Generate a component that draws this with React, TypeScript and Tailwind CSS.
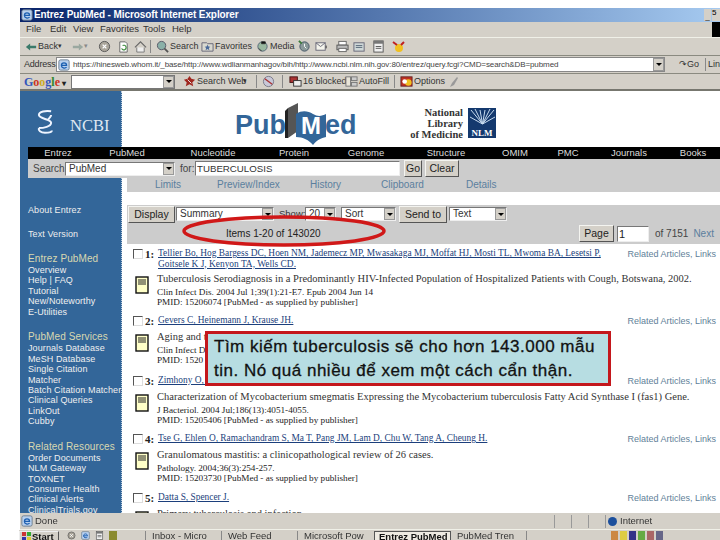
import React from "react";

const sans = "font-['Liberation_Sans',Arial,sans-serif]";
const serif = "font-['Liberation_Serif','Times_New_Roman',serif]";

function Arrow() {
  return <span className="w-0 h-0 border-x-[3px] border-x-transparent border-t-[3px] border-t-black" />;
}

function Sel({ w, text }: { w: string; text: string }) {
  return (
    <div className={`${w} h-[14px] bg-white border border-[#777] border-b-[#eee] border-r-[#eee] flex items-center justify-between pl-[3px] overflow-hidden`}>
      <span className="text-[10px] leading-none text-[#333] whitespace-nowrap">{text}</span>
      <span className="w-[11px] h-[12px] bg-[#d4d0c8] border border-[#999] flex items-center justify-center shrink-0"><Arrow /></span>
    </div>
  );
}

function Btn({ children, w }: { children: React.ReactNode; w: string }) {
  return (
    <div className={`${w} h-[17px] bg-[#d4d0c8] border border-[#f4f4f0] border-r-[#555] border-b-[#555] flex items-center justify-center text-[10.5px] leading-none text-[#222]`}>
      {children}
    </div>
  );
}

function DocIcon() {
  return (
    <svg width="14" height="18" viewBox="0 0 14 18" className="shrink-0">
      <rect x="1" y="1" width="12" height="16" fill="#ffffc8" stroke="#111" strokeWidth="1.4" />
      <path d="M3 4h8M3 6h8M3 8h8" stroke="#222" strokeWidth="1" />
    </svg>
  );
}

function Ico({ d, size = 14 }: { d: React.ReactNode; size?: number }) {
  return <svg width={size} height={size} viewBox="0 0 14 14" className="shrink-0">{d}</svg>;
}

const icons: Record<string, React.ReactNode> = {
  back: <path d="M1 7l5-4v2.5h7v3H6V11z" fill="#3a7a6a" />,
  fwd: <path d="M13 7L8 3v2.5H1v3h7V11z" fill="#9aa8a0" />,
  stop: <><circle cx="7" cy="7" r="5.5" fill="#aaa59a" stroke="#555" /><path d="M5 5l4 4M9 5l-4 4" stroke="#fff" strokeWidth="1.4" /></>,
  refresh: <><path d="M3 2h6l2 2v9H3z" fill="#fff" stroke="#666" /><path d="M5 9a2.5 2.5 0 1 0 1-3" fill="none" stroke="#3a8a3a" strokeWidth="1.2" /></>,
  home: <><path d="M1 8l6-6 6 6" fill="none" stroke="#666" strokeWidth="1.2" /><path d="M3 8v5h8V8" fill="#eee" stroke="#777" /></>,
  search: <><circle cx="6" cy="6" r="4.5" fill="#8ab0a8" stroke="#556" /><path d="M9 9l4 4" stroke="#555" strokeWidth="2" /></>,
  fav: <><path d="M1 3h5l1 1h6v8H1z" fill="#d8d8d0" stroke="#667" /><path d="M7 5l1 2 2 .2-1.5 1.4L9 11 7 9.8 5 11l.5-2.4L4 7.2 6 7z" fill="#4a6a9a" /></>,
  media: <><circle cx="7" cy="7" r="5" fill="#9ab8a0" stroke="#567" /><path d="M6 2h4v2H6zM3 9l3 3" stroke="#333" strokeWidth="1" /></>,
  history: <><circle cx="7" cy="7" r="5" fill="#8a9a9a" stroke="#456" /><path d="M7 4v3l2 2" stroke="#fff" strokeWidth="1" fill="none" /><path d="M1 1l3 3" stroke="#3a7a3a" strokeWidth="2" /></>,
  mail: <><rect x="1" y="3" width="10" height="8" fill="#f4f4ec" stroke="#667" /><path d="M1 3l5 4 5-4" fill="none" stroke="#667" /><path d="M12 6v3" stroke="#333" /></>,
  print: <><rect x="3" y="1.5" width="8" height="4" fill="#fff" stroke="#666" /><rect x="1" y="5.5" width="12" height="5" fill="#bbb" stroke="#555" /><rect x="3" y="9" width="8" height="3.5" fill="#fff" stroke="#666" /></>,
  edit: <><rect x="1" y="3" width="11" height="9" fill="#cfd8d8" stroke="#667" /><path d="M3 6h7M3 8h7" stroke="#567" /></>,
  page: <><rect x="2" y="1" width="10" height="12" fill="#f0f0f0" stroke="#555" /><rect x="2" y="1" width="10" height="3" fill="#777" /><path d="M4 7h6M4 9h6" stroke="#555" /></>,
  ie: <><rect x="1" y="1" width="12" height="12" rx="2" fill="#b8d0ee" stroke="#678" /><path d="M4 7.5c0-4 6-4 6 0H4c0 3 4 4 6 2" fill="none" stroke="#1c5fb0" strokeWidth="1.5" /></>,
  sweb: <><path d="M7 1l2 3 4 1-3 3 1 4-4-2-4 2 1-4-3-3 4-1z" fill="#a02820" /><path d="M5 5l4 4" stroke="#eee" /></>,
  site: <><circle cx="7" cy="7" r="5.5" fill="#c8c8d8" stroke="#778" /><path d="M3 4l8 6" stroke="#a33" strokeWidth="1.5" /></>,
  popup: <><rect x="1" y="2" width="8" height="6" fill="#a33" stroke="#411" /><rect x="5" y="6" width="8" height="6" fill="#eee" stroke="#333" /></>,
  fill: <><rect x="1" y="2" width="5" height="10" fill="#e8e4d8" stroke="#777" /><rect x="7" y="2" width="6" height="4" fill="#ccc" stroke="#777" /><rect x="7" y="8" width="6" height="4" fill="#ccc" stroke="#777" /></>,
  opts: <><rect x="1" y="2" width="12" height="10" fill="#c03020" stroke="#622" /><circle cx="9" cy="8" r="3.5" fill="#f0c020" /><circle cx="5" cy="7" r="2.5" fill="#fff" /></>,
};

function Tool({ i, label, w }: { i: string; label?: string; w: string }) {
  return (
    <div className={`${w} flex items-center gap-[1px] shrink-0`}>
      <Ico d={icons[i]} size={13} />
      {label ? <span className="text-[9px] leading-none text-[#333] whitespace-nowrap">{label}</span> : null}
    </div>
  );
}

function SideGroup({ title, items }: { title: string; items: string[] }) {
  return (
    <div className="flex flex-col">
      <div className="text-[10px] tracking-[0.1px] leading-[12px] h-[12px] text-[#d8d8b0] whitespace-nowrap">{title}</div>
      {items.map((s) => (
        <div key={s} className="text-[9px] tracking-[0.1px] leading-[10.45px] h-[10.45px] text-[#f0f0f0] whitespace-nowrap">{s}</div>
      ))}
    </div>
  );
}

type Res = { n: string; a: string[]; t: string; j: string; p: string; h: string };

function Result({ n, a, t, j, p, h }: Res) {
  return (
    <div className={`flex flex-col ${h} overflow-hidden`}>
      <div className="flex items-start">
        <div className="w-[10px] h-[10px] mt-[1px] ml-[6px] border border-[#555] border-b-[#ddd] border-r-[#ddd] bg-white shrink-0" />
        <div className={`${serif} w-[14px] ml-[1px] text-[11px] leading-[12px] font-bold text-[#222] shrink-0 pl-[1px]`}>{n}</div>
        <div className={`${serif} w-[468px] text-[9.4px] leading-[10.5px] text-[#1c3f7c] underline shrink-0`}>
          {a.map((l) => (
            <div key={l} className="whitespace-nowrap">{l}</div>
          ))}
        </div>
        <div className="ml-auto pr-[4px] pt-[1px] text-[9px] leading-[11px] text-[#5f7f99] whitespace-nowrap">Related Articles, Links</div>
      </div>
      <div className="flex items-start mt-[5px]">
        <div className="ml-[8px] w-[22px] mt-[2px] shrink-0"><DocIcon /></div>
        <div className={`${serif} text-[9.2px] leading-[10.6px] text-[#222] whitespace-nowrap flex flex-col`}>
          <div className="mb-[2px] text-[10.5px] text-[#333]">{t}</div>
          <div>{j}</div>
          <div>{p}</div>
        </div>
      </div>
    </div>
  );
}

const nav: [string, string][] = [
  ["Entrez", "w-[60px]"],
  ["PubMed", "w-[78px]"],
  ["Nucleotide", "w-[94px]"],
  ["Protein", "w-[68px]"],
  ["Genome", "w-[76px]"],
  ["Structure", "w-[84px]"],
  ["OMIM", "w-[54px]"],
  ["PMC", "w-[52px]"],
  ["Journals", "w-[70px]"],
  ["Books", "w-[58px]"],
];

export default function App() {
  return (
    <div className={`${sans} relative w-[720px] h-[540px] overflow-hidden bg-white pt-[8px] pl-[20px]`}>
      <div className="w-[700px] h-[532px] flex flex-col blur-[0.35px]">
        {/* Title bar */}
        <div className="h-[14px] shrink-0 bg-gradient-to-r from-[#0a246a] to-[#a6caf0] flex items-center pl-[1px]">
          <span className="mr-[1px]"><Ico d={icons.ie} size={12} /></span>
          <span className="text-white text-[10px] font-bold leading-none whitespace-nowrap tracking-[-0.1px]">Entrez PubMed - Microsoft Internet Explorer</span>
          <span className="ml-auto w-[7px] h-[12px] bg-[#d4d0c8] flex items-end justify-center text-[8px] leading-none text-black">_</span>
          <span className="ml-[1px] w-[8px] h-[12px] bg-[#d4d0c8] text-[8px] leading-none text-black">5</span>
        </div>
        {/* Menu */}
        <div className="h-[16px] pb-[1px] shrink-0 bg-[#d4d0c8] border-b border-[#f0f0e8] flex items-center pl-[6px] text-[9.5px] text-[#333] leading-none">
          <span className="w-[24px]">File</span>
          <span className="w-[23px]">Edit</span>
          <span className="w-[27px]">View</span>
          <span className="w-[43px]">Favorites</span>
          <span className="w-[29px]">Tools</span>
          <span>Help</span>
          <span className="ml-auto w-[8px] h-[15px] bg-black" />
        </div>
        {/* Toolbar */}
        <div className="h-[18px] shrink-0 bg-[#d4d0c8] border-b border-[#8a8a80] flex items-center pl-[5px] text-[9px] text-[#333]">
          <Ico d={icons.back} size={12} />
          <span className="w-[20px] ml-[1px]">Back</span>
          <span className="w-[14px] text-[7px]">▾</span>
          <Ico d={icons.fwd} size={12} />
          <span className="w-[14px] text-[7px] text-[#888]">▾</span>
          <Tool i="stop" w="w-[19px]" />
          <Tool i="refresh" w="w-[17px]" />
          <Tool i="home" w="w-[16px]" />
          <span className="w-px h-[13px] bg-[#888] mr-[5px]" />
          <Tool i="search" label="Search" w="w-[45px]" />
          <Tool i="fav" label="Favorites" w="w-[55px]" />
          <Tool i="media" label="Media" w="w-[42px]" />
          <Tool i="history" w="w-[17px]" />
          <Tool i="mail" w="w-[21px]" />
          <Tool i="print" w="w-[17px]" />
          <Tool i="edit" w="w-[19px]" />
          <Tool i="page" w="w-[16px]" />
          <svg width="13" height="12" viewBox="0 0 13 12" className="ml-[4px]"><circle cx="7" cy="7" r="4" fill="#f0c020" /><path d="M1 1l4 3M12 1L9 4" stroke="#c02020" strokeWidth="2" /></svg>
        </div>
        {/* Address */}
        <div className="h-[18px] shrink-0 bg-[#d4d0c8] border-b border-[#8a8a80] flex items-center pl-[4px] text-[9px] text-[#333]">
          <span className="w-[32px] shrink-0 leading-none tracking-[-0.2px]">Address</span>
          <div className="w-[609px] h-[15px] shrink-0 bg-white border border-[#888] flex items-center overflow-hidden">
            <span className="ml-[1px] mr-[3px]"><Ico d={icons.ie} size={12} /></span>
            <span className="text-[8px] tracking-[-0.1px] leading-none whitespace-nowrap text-[#444] flex-1">https://hinesweb.whom.it/_base/http://www.wdlianmanhagov/bih/http://www.ncbi.nlm.nih.gov:80/entrez/query.fcgi?CMD=search&amp;DB=pubmed</span>
            <span className="w-[11px] h-[13px] bg-[#d4d0c8] border border-[#999] flex items-center justify-center shrink-0"><Arrow /></span>
          </div>
          <span className="ml-[14px] w-[26px] shrink-0 leading-none">↷Go</span>
          <span className="w-px h-[13px] bg-[#888] mr-[2px]" />
          <span className="w-[12px] overflow-hidden leading-none whitespace-nowrap">Lin</span>
        </div>
        {/* Google */}
        <div className="h-[17px] shrink-0 bg-[#d4d0c8] border-b-2 border-[#77776f] flex items-center pl-[4px] text-[9px] text-[#333]">
          <span className={`${serif} w-[47px] text-[12px] font-bold leading-none whitespace-nowrap shrink-0`}>
            <span className="text-[#3355bb]">G</span><span className="text-[#cc3322]">o</span><span className="text-[#ccaa22]">o</span><span className="text-[#3355bb]">g</span><span className="text-[#33882f]">l</span><span className="text-[#cc3322]">e</span><span className="text-[#222] text-[8px]"> ▾</span>
          </span>
          <div className="w-[104px] h-[14px] shrink-0 bg-white border border-[#777] flex justify-end">
            <span className="w-[11px] h-[12px] bg-[#d4d0c8] border border-[#999] flex items-center justify-center"><Arrow /></span>
          </div>
          <span className="ml-[8px]"><Tool i="sweb" label="Search Web" w="w-[60px]" /></span>
          <span className="text-[7px] w-[8px]">▾</span>
          <span className="w-px h-[13px] bg-[#888] mx-[5px]" />
          <Tool i="site" w="w-[20px]" />
          <span className="w-px h-[13px] bg-[#888] mr-[6px]" />
          <Tool i="popup" label="16 blocked" w="w-[56px]" />
          <Tool i="fill" label="AutoFill" w="w-[44px]" />
          <span className="w-px h-[13px] bg-[#888] mx-[5px]" />
          <Tool i="opts" label="Options" w="w-[47px]" />
          <svg width="10" height="12" viewBox="0 0 10 12" className="ml-[2px]"><path d="M8 1L3 7l-2 4 4-2 4-7z" fill="#999" /></svg>
        </div>
        {/* Page */}
        <div className="flex-1 min-h-0 flex bg-white overflow-hidden">
          {/* Sidebar */}
          <div className="w-[102px] shrink-0 bg-[#336699] border-r border-dotted border-[#bcd] flex flex-col pl-[8px] overflow-hidden">
            <div className="flex items-end h-[56px] pl-[6px] pb-[12px] gap-[14px] shrink-0">
              <svg width="22" height="26" viewBox="0 0 22 34" className="shrink-0" fill="none" stroke="#eef4ff" strokeWidth="2.6">
                <path d="M19 3C12 2 3 3 3 8s16 5 16 10-10 7-16 7" />
                <path d="M3 25c-1 3 2 6 8 6s9-1 9-3" />
                <path d="M15 14c2-3 4-4 4-6" />
              </svg>
              <span className={`${serif} text-[16.5px] leading-[18px] text-[#dfe8f2]`}>NCBI</span>
            </div>
            <div className="h-[57px] shrink-0" />
            <div className="text-[9px] tracking-[0.1px] leading-[12px] text-[#eee] whitespace-nowrap">About Entrez</div>
            <div className="text-[9px] tracking-[0.1px] leading-[12px] text-[#eee] mt-[12px] whitespace-nowrap">Text Version</div>
            <div className="mt-[13px]"><SideGroup title="Entrez PubMed" items={["Overview", "Help | FAQ", "Tutorial", "New/Noteworthy", "E-Utilities"]} /></div>
            <div className="mt-[14px]"><SideGroup title="PubMed Services" items={["Journals Database", "MeSH Database", "Single Citation", "Matcher", "Batch Citation Matcher", "Clinical Queries", "LinkOut", "Cubby"]} /></div>
            <div className="mt-[14px]"><SideGroup title="Related Resources" items={["Order Documents", "NLM Gateway", "   TOXNET", "Consumer Health", "Clinical Alerts", "ClinicalTrials.gov"]} /></div>
          </div>
          {/* Main */}
          <div className="flex-1 min-w-0 flex flex-col">
            {/* Logos */}
            <div className="h-[56px] shrink-0 flex">
              <div className="ml-[113px] mt-[12px] w-[122px] flex items-center h-[44px] text-[#336699] font-bold text-[27px] leading-none">
                <span>Pub</span>
                <svg width="14" height="38" viewBox="0 0 14 38" className="shrink-0 -ml-[1px] mb-[8px]">
                  <path d="M3 36V6L13 1v28z" fill="#555" />
                  <path d="M3 36V6l-3 3v27z" fill="#222" />
                </svg>
                <span className="relative w-[30px] h-[34px] flex items-center justify-center text-white text-[24px] shrink-0 -ml-[3px] mt-[2px]">
                  <svg width="30" height="36" viewBox="0 0 30 36" className="absolute left-0 top-0"><path d="M0 5c6-4 12-3 17 0s9 2 13 0v23c-5 1-9 3-13 8-4-5-10-8-17-8z" fill="#336699" /></svg>
                  <span className="relative">M</span>
                </span>
                <span className="-ml-[1px]">ed</span>
              </div>
              <div className={`${serif} ml-[50px] mt-[16px] flex flex-col items-end text-[10.5px] leading-[11px] text-[#333] whitespace-nowrap font-bold w-[56px]`}>
                <span>National</span>
                <span>Library</span>
                <span>of Medicine</span>
              </div>
              <div className="ml-[5px] mt-[17px] w-[28px] h-[30px] bg-[#14396e] flex flex-col items-center justify-end overflow-hidden">
                <svg width="25" height="20" viewBox="0 0 25 20" className="shrink-0" stroke="#c8dcf0" strokeWidth="1">
                  <path d="M12.5 16L1 2M12.5 16L5 1M12.5 16L10 2M12.5 16L15 2M12.5 16L20 1M12.5 16L24 2M12.5 16L0 9M12.5 16L25 9" />
                </svg>
                <span className={`${serif} text-[9px] font-bold leading-[10px] text-white`}>NLM</span>
              </div>
            </div>
            {/* Black nav */}
            <div className="relative -ml-[94px] h-[12px] shrink-0 bg-black flex items-center text-[9.5px] leading-none text-[#ddd]">
              {nav.map(([t, w]) => (
                <span key={t} className={`${w} text-center shrink-0 whitespace-nowrap`}>{t}</span>
              ))}
            </div>
            {/* Search row */}
            <div className="relative -ml-[94px] h-[19px] shrink-0 bg-[#cccccc] flex items-center pl-[5px] text-[10px] text-[#444]">
              <span className="w-[32px] leading-none shrink-0">Search</span>
              <Sel w="w-[110px]" text="PubMed" />
              <span className="ml-[5px] w-[15px] leading-none shrink-0">for:</span>
              <div className="w-[205px] h-[15px] bg-white border border-[#777] border-b-[#eee] border-r-[#eee] text-[9.7px] leading-[13px] text-[#333] pl-[1px] shrink-0">TUBERCULOSIS</div>
              <div className="ml-[4px]"><Btn w="w-[18px]">Go</Btn></div>
              <div className="ml-[3px]"><Btn w="w-[34px]">Clear</Btn></div>
            </div>
            {/* Tabs */}
            <div className="ml-[5px] h-[14px] shrink-0 bg-[#cccccc] flex items-center text-[10px] leading-none text-[#5b7f9e] whitespace-nowrap">
              <span className="ml-[28px] w-[62px]">Limits</span>
              <span className="w-[93px]">Preview/Index</span>
              <span className="w-[71px]">History</span>
              <span className="w-[85px]">Clipboard</span>
              <span>Details</span>
            </div>
            <div className="h-[13px] shrink-0" />
            {/* Display bar */}
            <div className="ml-[5px] h-[39px] shrink-0 bg-[#cccccc] flex flex-col">
              <div className="h-[18px] shrink-0 flex items-center pl-[1px] text-[9.5px] text-[#333]">
                <Btn w="w-[47px]">Display</Btn>
                <div className="ml-[1px]"><Sel w="w-[98px]" text="Summary" /></div>
                <span className="ml-[5px] w-[26px] leading-none">Show:</span>
                <Sel w="w-[31px]" text="20" />
                <div className="ml-[5px]"><Sel w="w-[55px]" text="Sort" /></div>
                <div className="ml-[3px]"><Btn w="w-[48px]">Send to</Btn></div>
                <div className="ml-[2px]"><Sel w="w-[58px]" text="Text" /></div>
              </div>
              <div className="flex-1 flex items-center text-[10px] text-[#222]">
                <span className="ml-[99px] leading-none whitespace-nowrap w-[100px]">Items 1-20 of 143020</span>
                <div className="ml-[253px]"><Btn w="w-[35px]">Page</Btn></div>
                <div className="ml-[3px] w-[32px] h-[16px] bg-white border border-[#777] border-b-[#eee] border-r-[#eee] text-[11px] leading-[14px] pl-[1px]">1</div>
                <span className="ml-[6px] leading-none text-[#444] whitespace-nowrap">of 7151</span>
                <span className="ml-[5px] leading-none text-[#5b7f9e]">Next</span>
              </div>
            </div>
            {/* Results */}
            <div className="ml-[5px] mt-[4px] flex flex-col">
              <Result n="1:" h="h-[67px]" a={["Tellier Bo, Hog Bargess DC, Hoen NM, Jademecz MP, Mwasakaga MJ, Moffat HJ, Mosti TL, Mwoma BA, Lesetsi P,", "Goitsele K J, Kenyon TA, Wells CD."]} t="Tuberculosis Serodiagnosis in a Predominantly HIV-Infected Population of Hospitalized Patients with Cough, Botswana, 2002." j="Clin Infect Dis. 2004 Jul 1;39(1):21-E7. Epub 2004 Jun 14" p="PMID: 15206074 [PubMed - as supplied by publisher]" />
              <Result n="2:" h="h-[60px]" a={["Gevers C, Heinemann J, Krause JH."]} t="Aging and the" j="Clin Infect Dis." p="PMID: 1520" />
              <Result n="3:" h="h-[58px]" a={["Zimhony O, Vilcheze C."]} t="Characterization of Mycobacterium smegmatis Expressing the Mycobacterium tuberculosis Fatty Acid Synthase I (fas1) Gene." j="J Bacteriol. 2004 Jul;186(13):4051-4055." p="PMID: 15205406 [PubMed - as supplied by publisher]" />
              <Result n="4:" h="h-[59px]" a={["Tse G, Ehlen O, Ramachandram S, Ma T, Pang JM, Lam D, Chu W, Tang A, Cheung H."]} t="Granulomatous mastitis: a clinicopathological review of 26 cases." j="Pathology. 2004;36(3):254-257." p="PMID: 15203730 [PubMed - as supplied by publisher]" />
              <Result n="5:" h="h-[60px]" a={["Datta S, Spencer J."]} t="Primary tuberculosis and infection" j="" p="" />
            </div>
          </div>
        </div>
        {/* Status bar */}
        <div className="h-[17px] shrink-0 bg-[#d4d0c8] border-b border-[#f0f0e8] flex items-center pl-[1px] text-[9.5px] leading-none text-[#333]">
          <span className="mr-[2px]"><Ico d={icons.ie} size={12} /></span>
          <span className="w-[519px]">Done</span>
          <span className="w-px h-[13px] bg-[#999] mr-[16px]" />
          <span className="w-px h-[13px] bg-[#999] mr-[16px]" />
          <span className="w-px h-[13px] bg-[#999] mr-[16px]" />
          <span className="w-px h-[13px] bg-[#999] mr-[2px]" />
          <span className="w-[9px] h-[9px] rounded-full bg-[#1c4f9c] mr-[3px]" />
          <span>Internet</span>
        </div>
        {/* Taskbar */}
        <div className="h-[10px] shrink-0 -ml-[1px] bg-[#d4d0c8] flex items-start pt-[1px] text-[9.5px] leading-none text-[#333] overflow-hidden">
          <span className="w-[40px] h-[12px] border border-[#eee] border-b-[#555] border-r-[#555] pl-[2px] font-bold text-[#111] whitespace-nowrap shrink-0 flex items-start gap-[1px]">
            <svg width="9" height="9" viewBox="0 0 9 9" className="shrink-0"><rect width="4" height="4" fill="#c33" /><rect x="5" width="4" height="4" fill="#3a3" /><rect y="5" width="4" height="4" fill="#33a" /><rect x="5" y="5" width="4" height="4" fill="#dc3" /></svg>
            Start
          </span>
          <span className="w-[86px] flex items-center gap-[5px] pl-[8px] shrink-0">
            <Ico d={icons.stop} size={9} /><Ico d={icons.ie} size={9} /><Ico d={icons.page} size={9} /><span className="w-[8px] h-[9px] bg-[#8a8a30]" />
          </span>
          <span className="w-[76px] h-[12px] border-l border-[#888] pl-[6px] whitespace-nowrap overflow-hidden shrink-0">Inbox - Micro</span>
          <span className="w-[76px] h-[12px] border-l border-[#888] pl-[6px] whitespace-nowrap overflow-hidden shrink-0">Web Feed</span>
          <span className="w-[77px] h-[12px] border-l border-[#888] pl-[6px] whitespace-nowrap overflow-hidden shrink-0">Microsoft Pow</span>
          <span className="w-[77px] h-[12px] border border-[#555] bg-[#eeeae2] pl-[4px] font-bold text-[#111] whitespace-nowrap overflow-hidden shrink-0">Entrez PubMed</span>
          <span className="w-[76px] h-[12px] border-r border-[#888] pl-[6px] whitespace-nowrap overflow-hidden shrink-0">PubMed Tren</span>
          <span className="ml-[84px] flex items-center gap-[2px] shrink-0">
            <span className="w-[7px] h-[9px] bg-[#c84]" /><span className="w-[7px] h-[9px] bg-[#dc4]" /><span className="w-[7px] h-[9px] bg-[#338]" /><span className="w-[7px] h-[9px] bg-[#6a4]" /><span className="w-[7px] h-[9px] bg-[#a66]" /><span className="w-[7px] h-[9px] bg-[#668]" />
          </span>
        </div>
      </div>
      {/* Red hand-drawn ellipse over the result count */}
      <svg width="220" height="40" viewBox="0 0 220 40" className="absolute left-[174px] top-[211px]">
        <ellipse cx="110" cy="20" rx="100" ry="14" fill="none" stroke="#d01818" strokeWidth="3.5" />
      </svg>
      {/* Callout */}
      <div className="absolute left-[205px] top-[331px] w-[406px] h-[55px] bg-[#b7dde2] border-[3px] border-[#c4171c] pl-[6px] pt-[1px] text-[17px] leading-[24px] text-[#111] tracking-[0.5px] [-webkit-text-stroke:0.3px_#111] whitespace-nowrap">
        <div>Tìm kiếm tuberculosis sẽ cho hơn 143.000 mẫu</div>
        <div>tin. Nó quá nhiều để xem một cách cẩn thận.</div>
      </div>
    </div>
  );
}
